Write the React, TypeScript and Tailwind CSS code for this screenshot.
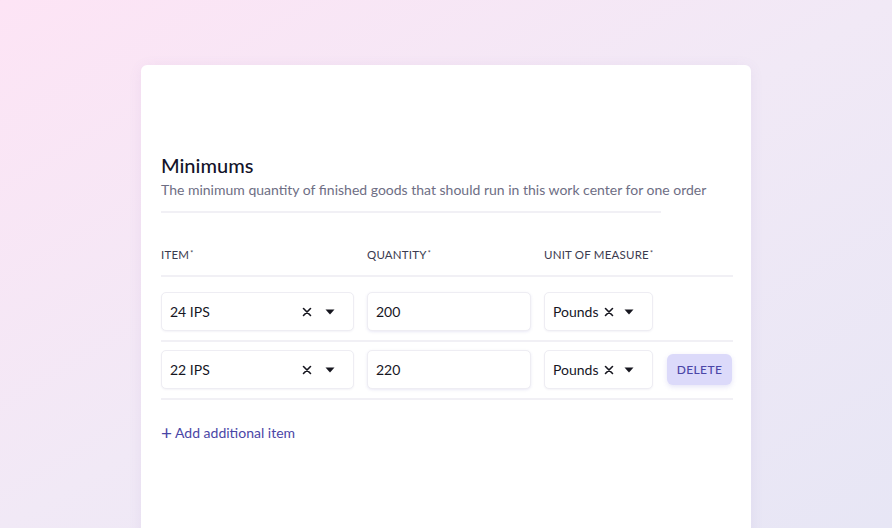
import React from 'react';

interface Row {
  id: string;
  item: string;
  quantity: string;
  unit: string;
}

const rows: Row[] = [
  { id: 'r1', item: '24 IPS', quantity: '200', unit: 'Pounds' },
  { id: 'r2', item: '22 IPS', quantity: '220', unit: 'Pounds' },
];

const ClearIcon = () => (
  <svg width="10" height="10" viewBox="0 0 10 10" fill="none" stroke="#16161f" strokeWidth="1.6" strokeLinecap="round">
    <path d="M1.5 1.5l7 7M8.5 1.5l-7 7" />
  </svg>
);

const Caret = () => (
  <svg width="10" height="6" viewBox="0 0 10 6" fill="#16161f">
    <path d="M0.5 0.5h9L5 5.5z" />
  </svg>
);

const boxClass =
  'h-[39px] rounded-[5px] border border-[#eeedf3] bg-white shadow-[0_1px_2px_rgba(60,50,120,0.06)] flex items-center text-[14px] text-[#16161f]';

const App: React.FC = () => {
  return (
    <div
      className="w-[892px] h-[528px] overflow-hidden bg-gradient-to-br from-[#fde4f5] via-[#f1e9f6] to-[#e7e6f5] pt-[65px] pl-[141px]"
      style={{ fontFamily: 'Lato, "Open Sans", sans-serif' }}
    >
      <div className="w-[610px] h-[500px] bg-white rounded-t-[6px] shadow-[0_2px_14px_rgba(120,90,160,0.08)] pt-[86px] pl-[20px] pr-[18px]">
        <h2 className="text-[20px] leading-[28px] font-medium text-[#13132a]">Minimums</h2>
        <p className="text-[14px] leading-[20px] mt-[1px] text-[#6e6e84]">
          The minimum quantity of finished goods that should run in this work center for one order
        </p>
        <div className="w-[500px] h-[2px] bg-[#f1f0f5] mt-[11px]" />

        <div className="grid grid-cols-[193px_164px_109px_65px] gap-x-[13px] mt-[34px] pb-[12px] border-b-2 border-[#f1f0f5] text-[11.5px] leading-[16px] tracking-[0.2px] text-[#3b3b4f] whitespace-nowrap">
          <div>
            ITEM<sup className="text-[7px] ml-[1px]">*</sup>
          </div>
          <div>
            QUANTITY<sup className="text-[7px] ml-[1px]">*</sup>
          </div>
          <div>
            UNIT OF MEASURE<sup className="text-[7px] ml-[1px]">*</sup>
          </div>
          <div />
        </div>

        {rows.map((row, i) => (
          <div
            key={row.id}
            className={`grid grid-cols-[193px_164px_109px_65px] gap-x-[13px] items-center border-b-2 border-[#f1f0f5] pb-[9px] ${
              i === 0 ? 'pt-[15px]' : 'pt-[8px]'
            }`}
          >
            <div className={`${boxClass} pl-[8px] pr-[18px]`}>
              <span className="flex-1">{row.item}</span>
              <span className="mr-[13px] flex">
                <ClearIcon />
              </span>
              <Caret />
            </div>
            <div className={`${boxClass} pl-[8px] shadow-[0_1px_3px_rgba(80,70,170,0.12)]`}>{row.quantity}</div>
            <div className={`${boxClass} pl-[8px] pr-[18px]`}>
              <span>{row.unit}</span>
              <span className="ml-[5px] flex">
                <ClearIcon />
              </span>
              <span className="ml-auto flex">
                <Caret />
              </span>
            </div>
            <div className="ml-[1px]">
              {i === 1 && (
                <button className="w-[65px] h-[31px] rounded-[6px] bg-[#dcdafa] text-[12px] tracking-[0.4px] font-medium text-[#4b46a8] shadow-[0_2px_5px_rgba(90,80,200,0.15)]">
                  DELETE
                </button>
              )}
            </div>
          </div>
        ))}

        <button className="mt-[23px] text-[14px] leading-[20px] text-[#4a46a6] flex items-center">
          <span className="text-[19px] leading-[20px] mr-[3px]">+</span>Add additional item
        </button>
      </div>
    </div>
  );
};

export default App;
